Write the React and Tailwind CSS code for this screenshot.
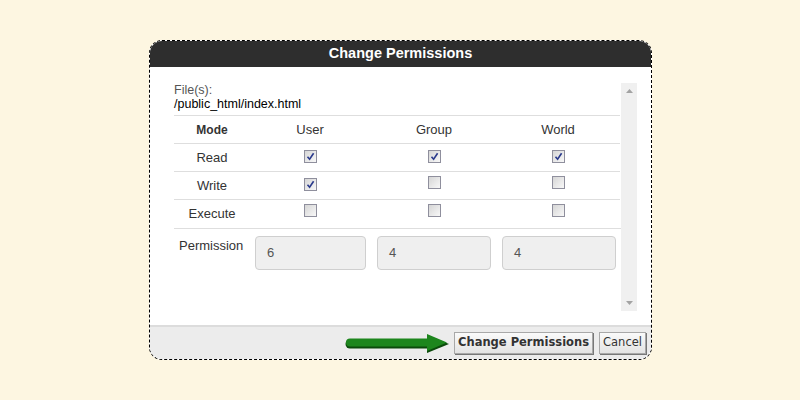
const cols = ['User', 'Group', 'World'];

const rows = [
  { label: 'Read', checked: [true, true, true] },
  { label: 'Write', checked: [true, false, false] },
  { label: 'Execute', checked: [false, false, false] },
];

const Check = ({ on }) => (
  <span className="inline-flex items-center justify-center w-[13px] h-[13px] border border-[#8f8f9d] bg-gradient-to-br from-[#d6d6d6] to-[#f8f8f8]">
    {on && (
      <svg width="9" height="9" viewBox="0 0 9 9">
        <path d="M1.5 4.8 L3.6 7.2 L7.6 1.2" fill="none" stroke="#2a3a8c" strokeWidth="1.6" />
      </svg>
    )}
  </span>
);

const Arrow = () => (
  <svg width="106" height="24" viewBox="0 0 106 24" className="mr-[3px]">
    <path d="M5 13 L84 13" stroke="#0b4a0b" strokeWidth="9" strokeLinecap="round" />
    <path d="M82 4 L104 13 L82 22 Z" fill="#0b4a0b" />
    <path d="M5 11.5 L84 11.5" stroke="#1d861d" strokeWidth="8" strokeLinecap="round" />
    <path d="M82 3 L102 11.5 L82 20 Z" fill="#1d861d" />
  </svg>
);

export default function App() {
  return (
    <div className="w-[800px] h-[400px] bg-[#fdf6e1] pt-[40px] pl-[149px] font-['Liberation_Sans',Arial,sans-serif]">
      <div className="w-[503px] h-[320px] rounded-[13px] border border-dashed border-black bg-white overflow-hidden flex flex-col">
        {/* title */}
        <div className="h-[26px] bg-[#2e2e2e] flex items-center justify-center text-white font-bold text-[14.5px]">
          Change Permissions
        </div>
        <div className="flex-1 flex pt-[16px] pl-[24px] pr-[14px] pb-[14px]">
          <div className="flex-1">
            <div className="text-[12.5px] leading-[14px] text-[#555]">File(s):</div>
            <div className="text-[12.5px] leading-[14px] text-black">/public_html/index.html</div>
            <table className="w-[446px] mt-[4px] border-collapse text-[13px] text-[#333]">
              <colgroup>
                <col className="w-[74px]" />
                <col className="w-[124px]" />
                <col className="w-[124px]" />
                <col className="w-[124px]" />
              </colgroup>
              <tbody>
                <tr className="h-[28px] border-t border-[#dedede]">
                  <td className="text-center font-bold pl-[2px] text-[12px]">Mode</td>
                  {cols.map((c) => (
                    <td key={c} className="text-center">{c}</td>
                  ))}
                </tr>
                {rows.map((r) => (
                  <tr key={r.label} className="h-[28px] border-t border-[#dedede]">
                    <td className="text-center pl-[2px]">{r.label}</td>
                    {r.checked.map((on, i) => (
                      <td key={i} className="text-center align-middle">
                        <span className="inline-flex relative top-[-1px]">
                          <Check on={on} />
                        </span>
                      </td>
                    ))}
                  </tr>
                ))}
              </tbody>
            </table>
            <div className="border-t border-[#dedede] flex pt-[7px] text-[13px] text-[#333]">
              <div className="w-[81px] pl-[5px]">Permission</div>
              <div className="flex gap-[11px]">
                {[['6', 'w-[111px]'], ['4', 'w-[114px]'], ['4', 'w-[114px]']].map(([v, w], i) => (
                  <div
                    key={i}
                    className={`${w} h-[34px] rounded-[4px] border border-[#cfcfcf] bg-[#efefef] flex items-center pl-[11px] text-[13px] text-[#555]`}
                  >
                    {v}
                  </div>
                ))}
              </div>
            </div>
          </div>
          {/* scrollbar */}
          <div className="w-[16px] bg-[#f0f0f0] flex flex-col justify-between items-center py-[6px]">
            <svg width="7" height="4" viewBox="0 0 7 4"><path d="M0 4 L3.5 0 L7 4 Z" fill="#a3a3a3" /></svg>
            <svg width="7" height="4" viewBox="0 0 7 4"><path d="M0 0 L3.5 4 L7 0 Z" fill="#a3a3a3" /></svg>
          </div>
        </div>
        {/* footer */}
        <div className="h-[34px] bg-[#ececec] border-t-[2px] border-[#dcdcdc] flex items-center justify-end pr-[5px] pb-[1px]">
          <Arrow />
          <button className="h-[22px] px-[3px] border border-[#a8a8a8] bg-gradient-to-b from-[#fafafa] to-[#e4e4e4] text-[11.5px] font-bold text-[#333] font-['DejaVu_Sans',Verdana,sans-serif] shadow-[1px_1px_0_#777]">
            Change Permissions
          </button>
          <button className="h-[22px] ml-[6px] px-[3px] border border-[#a8a8a8] bg-gradient-to-b from-[#fafafa] to-[#e4e4e4] text-[11.5px] text-[#333] font-['DejaVu_Sans',Verdana,sans-serif] shadow-[1px_1px_0_#777]">
            Cancel
          </button>
        </div>
      </div>
    </div>
  );
}
